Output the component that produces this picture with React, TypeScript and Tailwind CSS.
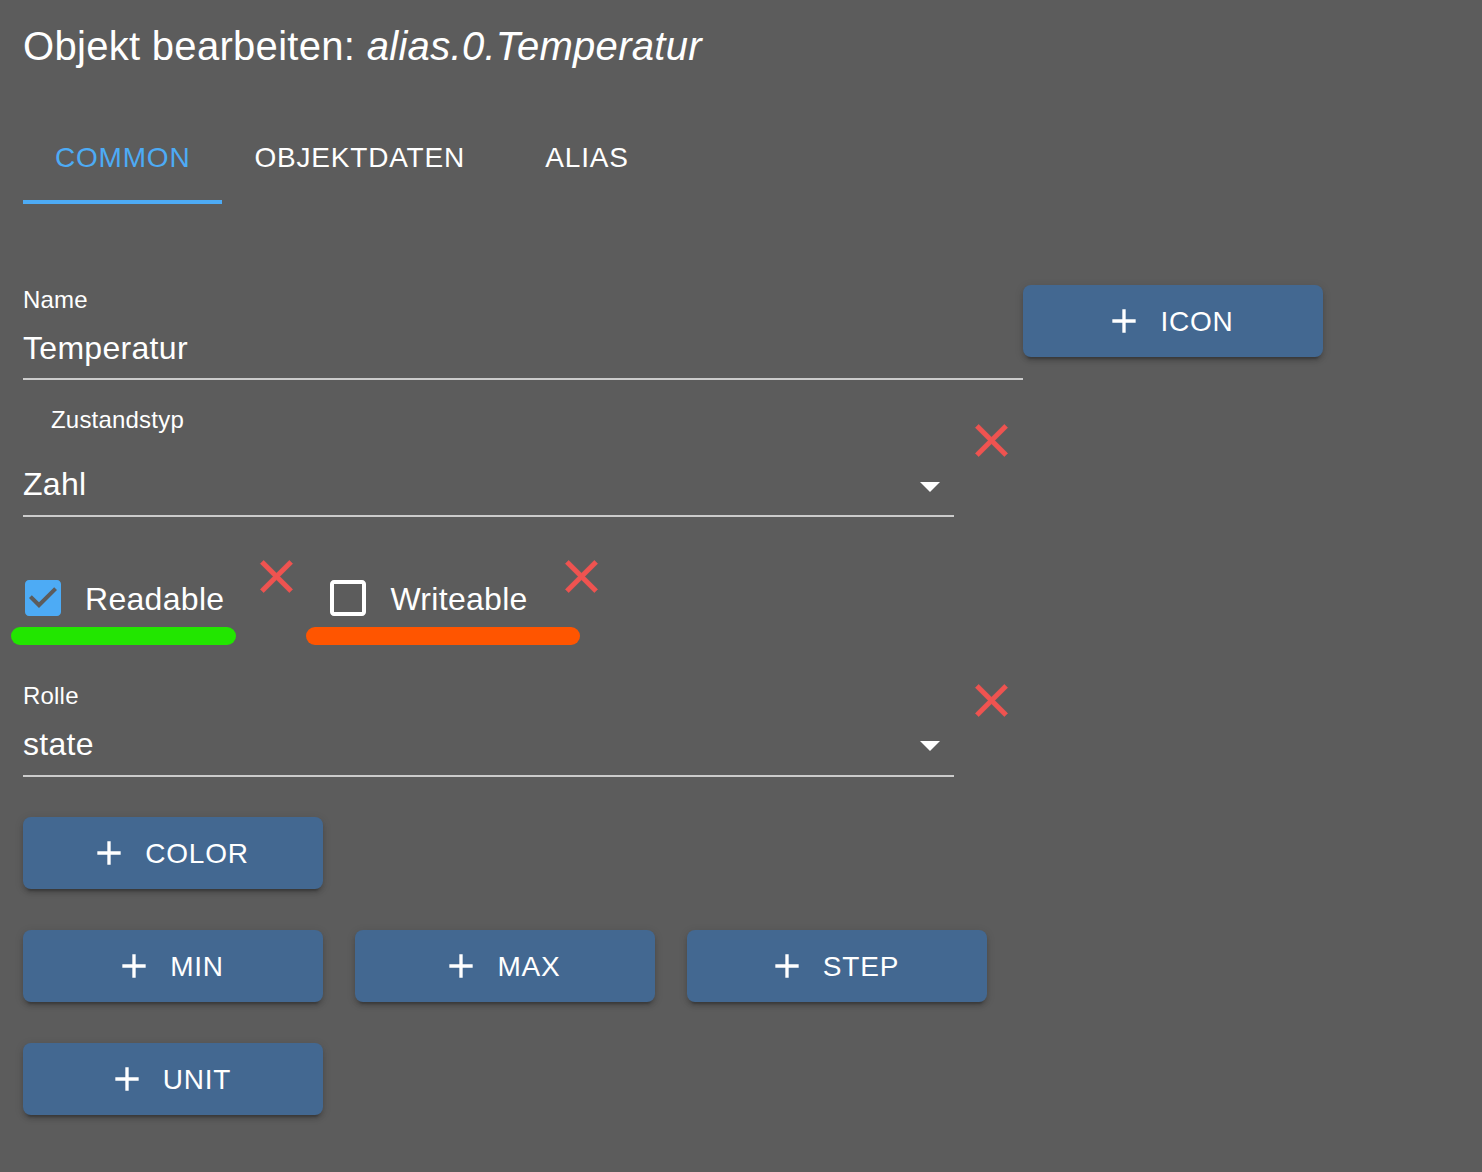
import React from "react";

const PlusIcon = () => (
  <svg viewBox="0 0 24 24" width="40" height="40" className="-ml-[8px] mr-[16px] shrink-0" fill="#ffffff">
    <path d="M19 13h-6v6h-2v-6H5v-2h6V5h2v6h6v2z" />
  </svg>
);

const CloseIcon = ({ className = "" }: { className?: string }) => (
  <svg viewBox="0 0 24 24" width="55" height="55" className={"shrink-0 " + className} fill="#ef5350">
    <path d="M19 6.41L17.59 5 12 10.59 6.41 5 5 6.41 10.59 12 5 17.59 6.41 19 12 13.41 17.59 19 19 17.59 13.41 12z" stroke="#ef5350" strokeWidth="0.3" />
  </svg>
);

const ArrowDrop = () => (
  <svg viewBox="0 0 24 24" width="48" height="48" className="shrink-0 -my-[5px] translate-y-[2px]" fill="#ffffff">
    <path d="M7 10l5 5 5-5z" />
  </svg>
);

const CheckedBox = () => (
  <svg viewBox="0 0 24 24" width="48" height="48" fill="#4dabf5">
    <path d="M19 3H5c-1.11 0-2 .9-2 2v14c0 1.1.89 2 2 2h14c1.11 0 2-.9 2-2V5c0-1.1-.89-2-2-2zm-9 14l-5-5 1.41-1.41L10 14.17l7.59-7.59L19 8l-9 9z" />
  </svg>
);

const BlankBox = () => (
  <svg viewBox="0 0 24 24" width="48" height="48" fill="#ffffff">
    <path d="M19 5v14H5V5h14m0-2H5c-1.1 0-2 .9-2 2v14c0 1.1.9 2 2 2h14c1.1 0 2-.9 2-2V5c0-1.1-.9-2-2-2z" />
  </svg>
);

const Btn = ({ label }: { label: string }) => (
  <div className="flex items-center justify-center w-[300px] h-[72px] rounded-[8px] bg-[#436891] shadow-[0_6px_2px_-4px_rgba(0,0,0,0.2),0_4px_4px_0_rgba(0,0,0,0.14),0_2px_10px_0_rgba(0,0,0,0.12)] text-[28px] leading-[32px] tracking-[0.8px] text-white shrink-0">
    <PlusIcon />
    <span className="translate-y-[1px]">{label}</span>
  </div>
);

export default function App() {
  return (
    <div className="min-h-screen w-full bg-[#5c5c5c] text-white font-['Liberation_Sans',Arial,sans-serif] pl-[23px] pb-[56px]">
      {/* Title */}
      <div className="pt-[22px] text-[40px] leading-[48px] tracking-[0.3px] whitespace-nowrap">
        Objekt bearbeiten: <span className="italic">alias.0.Temperatur</span>
      </div>

      {/* Tabs */}
      <div className="mt-[38px] flex h-[96px]">
        <div className="flex items-center justify-center min-w-[180px] px-[32px] pt-[8px] border-b-[4px] border-[#4dabf5] text-[#4dabf5] text-[28px] leading-[32px] tracking-[0.8px]">
          COMMON
        </div>
        <div className="flex items-center justify-center min-w-[180px] px-[32px] pt-[8px] border-b-[4px] border-transparent text-[28px] leading-[32px] tracking-[0.8px]">
          OBJEKTDATEN
        </div>
        <div className="flex items-center justify-center min-w-[180px] px-[32px] pt-[8px] border-b-[4px] border-transparent text-[28px] leading-[32px] tracking-[0.8px]">
          ALIAS
        </div>
      </div>

      {/* Name + Icon */}
      <div className="mt-[81px] flex items-start">
        <div className="w-[1000px] flex flex-col">
          <div className="pt-[3px] text-[24px] leading-[24px] tracking-[0.2px]">Name</div>
          <div className="mt-[17px] pb-[11px] border-b-2 border-[#cccccc] text-[32px] leading-[38px] tracking-[0.3px]">
            Temperatur
          </div>
        </div>
        <Btn label="ICON" />
      </div>

      {/* Zustandstyp */}
      <div className="flex items-start">
        <div className="w-[931px] flex flex-col">
          <div className="mt-[28px] pl-[28px] text-[24px] leading-[24px] tracking-[0.2px]">Zustandstyp</div>
          <div className="mt-[33px] pb-[12px] border-b-2 border-[#cccccc]">
            <div className="flex items-center justify-between h-[38px] text-[32px] leading-[38px] tracking-[0.3px]">
              <span>Zahl</span>
              <ArrowDrop />
            </div>
          </div>
        </div>
        <CloseIcon className="ml-[10px] mt-[33px]" />
      </div>

      {/* Checkboxes */}
      <div className="mt-[32px] flex items-start">
        <div className="relative flex items-center -ml-[22px] mt-[7px]">
          <div className="p-[18px]">
            <CheckedBox />
          </div>
          <span className="text-[32px] leading-[38px] tracking-[0.3px] translate-y-[1px]">Readable</span>
          <div className="absolute left-[10px] top-[71px] w-[225px] h-[18px] rounded-full bg-[#22e600]" />
        </div>
        <CloseIcon className="ml-[25px]" />
        <div className="relative flex items-center ml-[2px] mt-[7px]">
          <div className="p-[18px]">
            <BlankBox />
          </div>
          <span className="text-[32px] leading-[38px] tracking-[0.3px] translate-y-[1px]">Writeable</span>
          <div className="absolute left-0 top-[71px] w-[274px] h-[18px] rounded-full bg-[#ff5500]" />
        </div>
        <CloseIcon className="ml-[26px]" />
      </div>

      {/* Rolle */}
      <div className="flex items-start">
        <div className="w-[931px] flex flex-col">
          <div className="mt-[44px] text-[24px] leading-[24px] tracking-[0.2px]">Rolle</div>
          <div className="mt-[16px] pb-[13px] border-b-2 border-[#cccccc]">
            <div className="flex items-center justify-between h-[38px] text-[32px] leading-[38px] tracking-[0.3px]">
              <span className="translate-y-[1px]">state</span>
              <ArrowDrop />
            </div>
          </div>
        </div>
        <CloseIcon className="ml-[10px] mt-[33px]" />
      </div>

      {/* Buttons */}
      <div className="mt-[40px] flex">
        <Btn label="COLOR" />
      </div>
      <div className="mt-[41px] flex gap-x-[32px]">
        <Btn label="MIN" />
        <Btn label="MAX" />
        <Btn label="STEP" />
      </div>
      <div className="mt-[41px] flex">
        <Btn label="UNIT" />
      </div>
    </div>
  );
}
